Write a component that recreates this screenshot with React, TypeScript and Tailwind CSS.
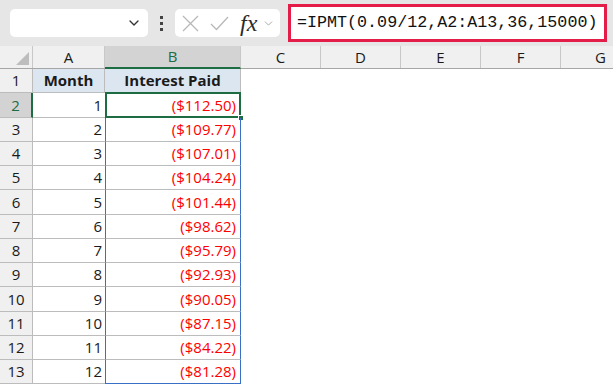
import { ChevronDown } from "lucide-react";

const rows = [
  [1, "($112.50)"],
  [2, "($109.77)"],
  [3, "($107.01)"],
  [4, "($104.24)"],
  [5, "($101.44)"],
  [6, "($98.62)"],
  [7, "($95.79)"],
  [8, "($92.93)"],
  [9, "($90.05)"],
  [10, "($87.15)"],
  [11, "($84.22)"],
  [12, "($81.28)"],
] as const;

const other = ["C", "D", "E", "F", "G"];

export default function App() {
  return (
    <div className="h-[384px] w-[613px] overflow-hidden bg-white font-['Open_Sans',sans-serif] text-[15px] text-[#1a1a1a]">
      {/* Formula bar */}
      <div className="flex h-[46px] items-center bg-[#e6e6e6] pl-[10px]">
        <div className="flex h-[28px] w-[138px] shrink-0 items-center justify-end rounded-[5px] bg-white pr-[6px]">
          <ChevronDown className="h-4 w-4 text-[#333]" strokeWidth={2} />
        </div>
        <div className="mx-[12px] flex flex-col gap-[3px]">
          <span className="h-[3px] w-[3px] bg-[#444]" />
          <span className="h-[3px] w-[3px] bg-[#444]" />
          <span className="h-[3px] w-[3px] bg-[#444]" />
        </div>
        <div className="flex h-[28px] w-[105px] shrink-0 items-center rounded-[5px] bg-white pl-[7px]">
          <svg width="17" height="17" viewBox="0 0 17 17" fill="none" stroke="#b8b8b8" strokeWidth="1.3">
            <path d="M1 1L16 16M16 1L1 16" />
          </svg>
          <svg className="ml-[11px]" width="19" height="15" viewBox="0 0 19 15" fill="none" stroke="#b8b8b8" strokeWidth="1.3">
            <path d="M1 8L6.5 13.5L18 1" />
          </svg>
          <span className="ml-[11px] font-['Liberation_Serif',serif] text-[24px] italic leading-none text-[#2a2a2a]">fx</span>
          <ChevronDown className="ml-[5px] h-[13px] w-[13px] text-[#999]" strokeWidth={1.5} />
        </div>
        <div className="ml-[8px] flex h-[38px] w-[319px] shrink-0 items-center border-[3px] border-[#e31c48] bg-white pl-[6px]">
          <span className="font-['Liberation_Mono',monospace] text-[16.7px] text-[#111]">=IPMT(0.09/12,A2:A13,36,15000)</span>
        </div>
      </div>

      {/* Column headers */}
      <div className="flex h-[23px] border-b border-[#a6a6a6] bg-[#f0f0f0]">
        <div className="relative w-[33px] shrink-0 border-r border-[#c8c8c8]">
          <svg className="absolute bottom-[3px] right-[3px]" width="13" height="13" viewBox="0 0 13 13">
            <polygon points="13,0 13,13 0,13" fill="#bdbdbd" />
          </svg>
        </div>
        <div className="flex w-[72px] shrink-0 items-center justify-center border-r border-[#c8c8c8]">A</div>
        <div className="-mb-px flex w-[136px] shrink-0 items-center justify-center border-b-2 border-r border-b-[#1e6c41] border-r-[#c8c8c8] bg-[#d3d3d3] text-[#1e6c41]">
          B
        </div>
        {other.map((c) => (
          <div key={c} className="flex w-[80px] shrink-0 items-center justify-center border-r border-[#c8c8c8]">
            {c}
          </div>
        ))}
      </div>

      {/* Row 1 */}
      <div className="flex h-[24.25px]">
        <div className="flex w-[33px] shrink-0 items-center justify-center border-b border-r border-[#bcbcbc] bg-[#f0f0f0]">1</div>
        <div className="flex w-[72px] shrink-0 items-center justify-center border-b border-r border-[#bcbcbc] bg-[#dce6f1] font-bold">
          Month
        </div>
        <div className="flex w-[136px] shrink-0 items-center justify-center border-b border-r border-[#bcbcbc] bg-[#dce6f1] font-bold">
          Interest Paid
        </div>
      </div>

      {/* Data rows */}
      {rows.map(([m, v], i) => {
        const active = i === 0;
        const last = i === rows.length - 1;
        return (
          <div key={m} className="flex h-[24.25px]">
            <div
              className={
                active
                  ? "flex w-[33px] shrink-0 items-center justify-center border-b border-r-2 border-b-[#bcbcbc] border-r-[#1e6c41] bg-[#d3d3d3] text-[#1e6c41]"
                  : "flex w-[33px] shrink-0 items-center justify-center border-b border-r border-[#bcbcbc] bg-[#f0f0f0]"
              }
            >
              {i + 2}
            </div>
            <div className="flex w-[72px] shrink-0 items-center justify-end border-b border-[#bcbcbc] pr-[3px]">{m}</div>
            <div
              className={
                last
                  ? "relative flex w-[136px] shrink-0 items-center justify-end border-x border-b border-[#3a6fc6] pr-[4px] text-[#ff0000]"
                  : "relative flex w-[136px] shrink-0 items-center justify-end border-x border-b border-x-[#3a6fc6] border-b-[#bcbcbc] pr-[4px] text-[#ff0000]"
              }
            >
              {v}
              {active && (
                <>
                  <span className="absolute -left-px -top-px h-[calc(100%+2px)] w-[calc(100%+2px)] border-2 border-[#1e6c41]" />
                  <span className="absolute -bottom-[4px] -right-[4px] h-[6px] w-[6px] border border-white bg-[#1e6c41]" />
                </>
              )}
            </div>
          </div>
        );
      })}
    </div>
  );
}
